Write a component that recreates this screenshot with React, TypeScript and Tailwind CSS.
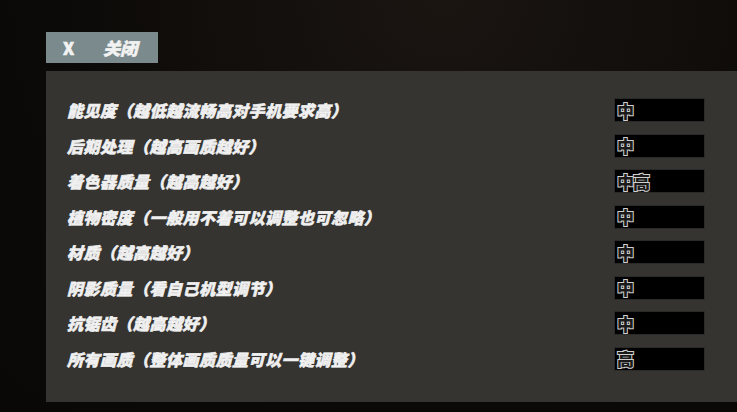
import React from "react";

const rows: [string, string][] = [
  ["能见度（越低越流畅高对手机要求高）", "中"],
  ["后期处理（越高画质越好）", "中"],
  ["着色器质量（越高越好）", "中高"],
  ["植物密度（一般用不着可以调整也可忽略）", "中"],
  ["材质（越高越好）", "中"],
  ["阴影质量（看自己机型调节）", "中"],
  ["抗锯齿（越高越好）", "中"],
  ["所有画质（整体画质质量可以一键调整）", "高"],
];

const font = { fontFamily: '"Noto Sans CJK SC", "Noto Sans", sans-serif' };

export default function App() {
  return (
    <div
      className="w-[737px] h-[412px] overflow-hidden flex flex-col bg-[radial-gradient(ellipse_at_60%_0%,#1a1511_0%,#0c0a08_60%,#0a0806_100%)]"
      style={font}
    >
      <div
        className="ml-[46px] mt-[32px] w-[112px] h-[31px] bg-[#7b8a8c] flex items-center text-[#f2f2f2] font-black text-[17px] leading-none"
        style={{ WebkitTextStroke: "0.6px #f2f2f2" }}
      >
        <span className="ml-[17px]">X</span>
        <span className="ml-[29px] italic">关闭</span>
      </div>
      <div className="ml-[46px] mt-[8px] h-[331px] bg-[#353431] flex flex-col gap-y-[11.5px] pt-[27px] pl-[21px] pr-[32px]">
        {rows.map(([label, value], i) => (
          <div key={i} className="h-[24px] flex items-center justify-between">
            <span
              className="text-[#f0f0f0] font-black italic text-[16px] tracking-[0.5px] leading-none"
              style={{ WebkitTextStroke: "0.6px #f0f0f0" }}
            >
              {label}
            </span>
            <div className="w-[91px] h-[24px] bg-black border border-[#2a2a2a] flex items-center pl-[2px]">
              <span
                className="font-black text-[17px] leading-none text-[#1a1a1a] tracking-[-1px]"
                style={{ WebkitTextStroke: "2px #d0d0d0", paintOrder: "stroke fill" }}
              >
                {value}
              </span>
            </div>
          </div>
        ))}
      </div>
    </div>
  );
}
